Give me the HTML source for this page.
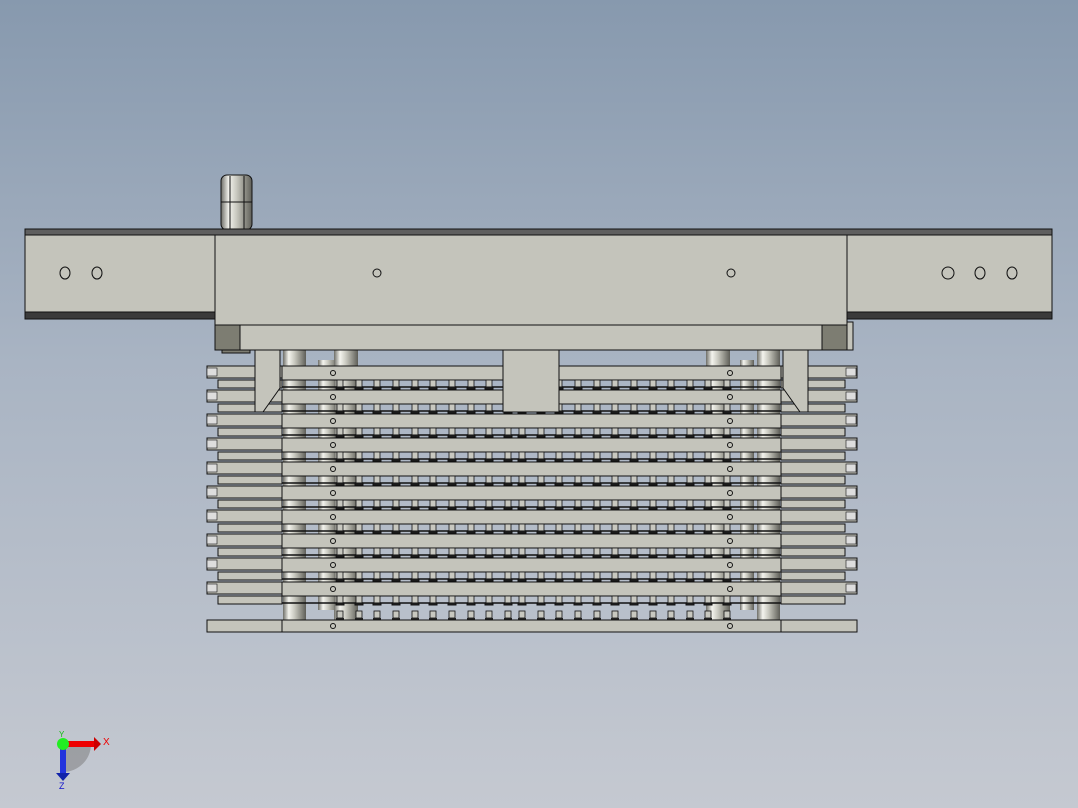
<!DOCTYPE html>
<html><head><meta charset="utf-8"><style>
html,body{margin:0;padding:0;width:1078px;height:808px;overflow:hidden}
body{background:linear-gradient(#8799ae,#a9b4c3 45%,#c5c9d1)}
svg{position:absolute;left:0;top:0}
</style></head><body>
<svg width="1078" height="808" viewBox="0 0 1078 808" xmlns="http://www.w3.org/2000/svg">
<defs>
<linearGradient id="cyl" x1="0" x2="1" y1="0" y2="0">
<stop offset="0" stop-color="#6e6e68"/><stop offset="0.25" stop-color="#f4f4ee"/><stop offset="0.5" stop-color="#c9c9c0"/><stop offset="0.8" stop-color="#8a8a82"/><stop offset="1" stop-color="#5e5e58"/>
</linearGradient>
<g id="peg"><rect x="-3" y="0" width="6" height="7" fill="#c8c8c0" stroke="#111" stroke-width="0.8"/><rect x="-4" y="7" width="8" height="2" fill="#222"/></g>
<g id="pegs">
<use href="#peg" x="340"/><use href="#peg" x="359"/><use href="#peg" x="377"/><use href="#peg" x="396"/><use href="#peg" x="415"/><use href="#peg" x="433"/><use href="#peg" x="452"/><use href="#peg" x="471"/><use href="#peg" x="489"/><use href="#peg" x="508"/><use href="#peg" x="522"/><use href="#peg" x="541"/><use href="#peg" x="559"/><use href="#peg" x="578"/><use href="#peg" x="597"/><use href="#peg" x="615"/><use href="#peg" x="634"/><use href="#peg" x="653"/><use href="#peg" x="671"/><use href="#peg" x="690"/><use href="#peg" x="708"/><use href="#peg" x="727"/>
</g>
<g id="row" stroke="#111" stroke-width="1">
<rect x="282" y="0" width="499" height="14" fill="#c4c4bb"/>
<circle cx="333" cy="7" r="2.5" fill="none"/><circle cx="730" cy="7" r="2.5" fill="none"/>
<rect x="207" y="0" width="75" height="12" fill="#c4c4bb"/>
<rect x="207" y="2" width="10" height="8" fill="#ddd" stroke-width="0.6"/>
<rect x="218" y="14" width="64" height="8" fill="#c4c4bb"/>
<rect x="781" y="0" width="76" height="12" fill="#c4c4bb"/>
<rect x="846" y="2" width="10" height="8" fill="#ddd" stroke-width="0.6"/>
<rect x="781" y="14" width="64" height="8" fill="#c4c4bb"/>
<line x1="282" y1="21" x2="781" y2="21" stroke-width="1.5"/>
<use href="#pegs" y="14"/>
</g>
</defs>
<!-- pillars -->
<rect x="283" y="350" width="23" height="270" fill="url(#cyl)"/>
<rect x="318" y="360" width="20" height="250" fill="url(#cyl)"/>
<rect x="334" y="350" width="24" height="270" fill="url(#cyl)"/>
<rect x="706" y="350" width="24" height="270" fill="url(#cyl)"/>
<rect x="740" y="360" width="14" height="250" fill="url(#cyl)"/>
<rect x="757" y="350" width="23" height="270" fill="url(#cyl)"/>
<!-- rows -->
<use href="#row" y="366"/><use href="#row" y="390"/><use href="#row" y="414"/><use href="#row" y="438"/><use href="#row" y="462"/><use href="#row" y="486"/><use href="#row" y="510"/><use href="#row" y="534"/><use href="#row" y="558"/><use href="#row" y="582"/>
<use href="#pegs" y="611"/>
<g stroke="#111" stroke-width="1" fill="#c4c4bb">
<rect x="282" y="620" width="499" height="12"/><circle cx="333" cy="626" r="2.5" fill="none"/><circle cx="730" cy="626" r="2.5" fill="none"/>
<rect x="207" y="620" width="75" height="12"/><rect x="781" y="620" width="76" height="12"/>
<!-- brackets -->
<polygon points="255,349 280,349 280,388 263,412 255,412"/>
<polygon points="783,349 808,349 808,412 800,412 783,388"/>
<rect x="503" y="349" width="56" height="63"/>
<!-- knob -->
<rect x="221" y="175" width="31" height="55" rx="6" fill="url(#cyl)"/>
<line x1="230" y1="176" x2="230" y2="229"/><line x1="244" y1="176" x2="244" y2="229"/><line x1="221" y1="202" x2="252" y2="202"/>
<!-- beam -->
<rect x="25" y="229" width="1027" height="6" fill="#5f5f5f"/>
<rect x="25" y="235" width="190" height="77"/>
<rect x="25" y="312" width="190" height="7" fill="#3a3a3a"/>
<rect x="847" y="235" width="205" height="77"/>
<rect x="847" y="312" width="205" height="7" fill="#3a3a3a"/>
<rect x="215" y="235" width="632" height="90"/>
<rect x="215" y="325" width="632" height="25"/>
<rect x="215" y="325" width="25" height="25" fill="#7d7d72"/>
<rect x="822" y="325" width="25" height="25" fill="#7d7d72"/>
<rect x="222" y="350" width="28" height="3" fill="#7d7d72"/>
<rect x="847" y="322" width="6" height="28"/>
<ellipse cx="65" cy="273" rx="5" ry="6" fill="none"/><ellipse cx="97" cy="273" rx="5" ry="6" fill="none"/>
<circle cx="377" cy="273" r="4" fill="none"/><circle cx="731" cy="273" r="4" fill="none"/>
<ellipse cx="948" cy="273" rx="6" ry="6" fill="none"/><ellipse cx="980" cy="273" rx="5" ry="6" fill="none"/><ellipse cx="1012" cy="273" rx="5" ry="6" fill="none"/>
</g>
<!-- triad -->
<path d="M63 744 L91 744 A28 28 0 0 1 63 772 Z" fill="#777" opacity="0.5"/>
<rect x="63" y="741" width="32" height="6" fill="#e00"/><polygon points="94,737 101,744 94,751" fill="#c00"/>
<rect x="60" y="744" width="6" height="30" fill="#2233dd"/><polygon points="56,773 70,773 63,781" fill="#1122aa"/>
<circle cx="63" cy="744" r="6" fill="#22ee22"/>
<text x="103" y="745" font-family="Liberation Sans,sans-serif" font-size="10" fill="#e00">X</text>
<text x="59" y="789" font-family="Liberation Sans,sans-serif" font-size="9" fill="#11c">Z</text>
<text x="59" y="737" font-family="Liberation Sans,sans-serif" font-size="8" fill="#1b1">Y</text>
</svg>
</body></html>
